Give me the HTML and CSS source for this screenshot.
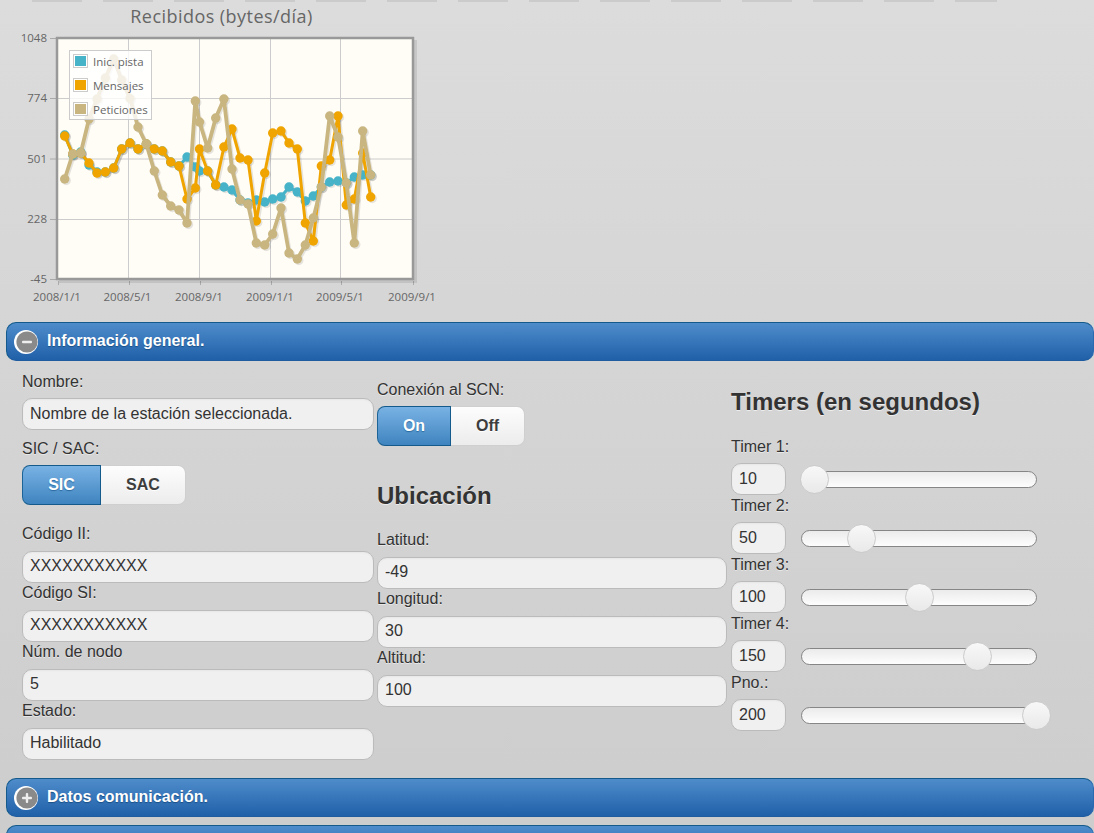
FILE: index.html
```html
<!DOCTYPE html>
<html lang="es">
<head>
<meta charset="utf-8">
<title>Estación</title>
<link rel="stylesheet" href="styles.css">
</head>
<body>
<div class="clipped-ticks"></div>
<section class="chart">
  <svg class="plot" width="450" height="320" viewBox="0 2 450 320" xmlns="http://www.w3.org/2000/svg">
    <defs>
      <marker id="dot-teal" markerUnits="userSpaceOnUse" markerWidth="12" markerHeight="12" refX="6" refY="6"><circle cx="6" cy="6" r="4.7" class="fill-teal"/></marker>
      <marker id="dot-orange" markerUnits="userSpaceOnUse" markerWidth="12" markerHeight="12" refX="6" refY="6"><circle cx="6" cy="6" r="4.7" class="fill-orange"/></marker>
      <marker id="dot-tan" markerUnits="userSpaceOnUse" markerWidth="12" markerHeight="12" refX="6" refY="6"><circle cx="6" cy="6" r="4.7" class="fill-tan"/></marker>
      <marker id="dot-shadow" markerUnits="userSpaceOnUse" markerWidth="12" markerHeight="12" refX="6" refY="6"><circle cx="6" cy="6" r="4.7" class="fill-shadow"/></marker>
      <polyline id="s-teal" points="64.7,135 72.7,155 80.7,152 89,165 97,172 105.3,172 113.7,168 121.7,149 130,143 138,149 146.3,144 154.3,149 162.3,151 170.7,162 179,166 187,157 195.3,167 199.5,171 207.6,171 215.7,185 223.9,187 232,190 240,200 248,203 256.3,200 264.7,202 272.7,199 281,197 289,187 297.3,192 305.3,201 313.3,196 321.3,187 329.7,182 338,181 346.3,183 354.3,177 362.7,175 370.7,175"/>
      <polyline id="s-orange" points="64.7,136 72.7,154 80.7,153 89,163 97,173 105.3,172 113.7,168 121.7,149 130,143 138,149 146.3,144 154.3,149 162.3,151 170.7,162 179,166 187,199 195.3,188 199.5,149 207.6,171 215.7,185 223.9,147 232,129 240,158 248,160 256.3,221 264.7,173 272.7,133 281,131 289,143 297.3,149 305.3,223 313.3,241 321.3,166 329.7,160 338,116 346.3,205 354.3,199 362.7,153 370.7,197"/>
      <polyline id="s-tan" points="64.7,179 72.7,154 80.7,153 89,119 97,99 105.3,78 113.7,59 121.7,80 130,98.5 138,127 146.3,144 154.3,171 162.3,195 170.7,206 179,210 187,223 195.3,101 199.5,122 207.6,148 215.7,118 223.9,99 232,169 240,200 248,204 256.3,243 264.7,245 272.7,234 281,208 289,253 297.3,259 305.3,245 313.3,218 321.3,187 329.7,116 338,137 346.3,183 354.3,243 362.7,131 370.7,175"/>
    </defs>

    <text class="title" x="221.5" y="23">Recibidos (bytes/día)</text>

    <rect class="canvas" x="57" y="38" width="356" height="241"/>
    <g class="grid">
      <line x1="58" y1="98.5" x2="413" y2="98.5"/>
      <line x1="58" y1="159" x2="413" y2="159"/>
      <line x1="58" y1="219.5" x2="413" y2="219.5"/>
      <line x1="128.5" y1="38" x2="128.5" y2="279"/>
      <line x1="199.5" y1="38" x2="199.5" y2="279"/>
      <line x1="270.5" y1="38" x2="270.5" y2="279"/>
      <line x1="340.5" y1="38" x2="340.5" y2="279"/>
    </g>
    <g class="ticks">
      <line x1="50" y1="38.5" x2="56" y2="38.5"/>
      <line x1="50" y1="98.5" x2="56" y2="98.5"/>
      <line x1="50" y1="159" x2="56" y2="159"/>
      <line x1="50" y1="219.5" x2="56" y2="219.5"/>
      <line x1="50" y1="279.5" x2="56" y2="279.5"/>
      <line x1="58.5" y1="281" x2="58.5" y2="285"/>
      <line x1="129.5" y1="281" x2="129.5" y2="285"/>
      <line x1="200.5" y1="281" x2="200.5" y2="285"/>
      <line x1="271.5" y1="281" x2="271.5" y2="285"/>
      <line x1="341.5" y1="281" x2="341.5" y2="285"/>
      <line x1="413.5" y1="281" x2="413.5" y2="285"/>
    </g>
    <polyline class="frame-shadow" points="415.5,40 415.5,281.5 59,281.5"/>
    <rect class="frame" x="57" y="38" width="356" height="241"/>

    <use href="#s-teal" class="shadow"/>
    <use href="#s-orange" class="shadow"/>
    <use href="#s-tan" class="shadow"/>
    <use href="#s-teal" class="line-teal"/>
    <use href="#s-orange" class="line-orange"/>
    <use href="#s-tan" class="line-tan"/>

    <g class="ylabels">
      <text x="47" y="42">1048</text>
      <text x="47" y="102">774</text>
      <text x="47" y="163">501</text>
      <text x="47" y="223">228</text>
      <text x="47" y="283">-45</text>
    </g>
    <g class="xlabels">
      <text x="57" y="301">2008/1/1</text>
      <text x="127.500" y="301">2008/5/1</text>
      <text x="199" y="301">2008/9/1</text>
      <text x="270" y="301">2009/1/1</text>
      <text x="340" y="301">2009/5/1</text>
      <text x="412" y="301">2009/9/1</text>
    </g>
  </svg>
  <ul class="legend">
    <li><i class="swatch sw-teal"></i>Inic. pista</li>
    <li><i class="swatch sw-orange"></i>Mensajes</li>
    <li><i class="swatch sw-tan"></i>Peticiones</li>
  </ul>
</section>

<h2 class="acc">
  <span class="acc-icon"><svg viewBox="0 0 24 24" width="24" height="24"><circle cx="12" cy="12" r="12" fill="#fff"/><circle cx="13" cy="12" r="10.6" fill="#8a8a8a"/><rect x="8" y="10.800" width="10" height="2.400" rx="1" fill="#eee"/></svg></span>
  Información general.
</h2>
<div class="panel">
  <div class="col col-a">
    <div class="field"><label>Nombre:</label><div class="input">Nombre de la estación seleccionada.</div></div>
    <div class="field gap-8"><label>SIC / SAC:</label>
      <div class="toggle toggle-a"><span class="opt on">SIC</span><span class="opt off">SAC</span></div></div>
    <div class="field gap-19"><label>Código II:</label><div class="input">XXXXXXXXXXX</div></div>
    <div class="field"><label>Código SI:</label><div class="input">XXXXXXXXXXX</div></div>
    <div class="field"><label>Núm. de nodo</label><div class="input">5</div></div>
    <div class="field"><label>Estado:</label><div class="input">Habilitado</div></div>
  </div>
  <div class="col col-b">
    <div class="field"><label>Conexión al SCN:</label>
      <div class="toggle toggle-b"><span class="opt on">On</span><span class="opt off">Off</span></div></div>
    <h3 class="heading h-ubic">Ubicación</h3>
    <div class="field"><label>Latitud:</label><div class="input">-49</div></div>
    <div class="field"><label>Longitud:</label><div class="input">30</div></div>
    <div class="field"><label>Altitud:</label><div class="input">100</div></div>
  </div>
  <div class="col col-c">
    <h3 class="heading h-timers">Timers (en segundos)</h3>
    <div class="field"><label>Timer 1:</label>
      <div class="slider-row"><div class="input num">10</div><div class="track"><span class="thumb" style="left:-1px"></span></div></div></div>
    <div class="field"><label>Timer 2:</label>
      <div class="slider-row"><div class="input num">50</div><div class="track"><span class="thumb" style="left:46px"></span></div></div></div>
    <div class="field"><label>Timer 3:</label>
      <div class="slider-row"><div class="input num">100</div><div class="track"><span class="thumb" style="left:104px"></span></div></div></div>
    <div class="field"><label>Timer 4:</label>
      <div class="slider-row"><div class="input num">150</div><div class="track"><span class="thumb" style="left:162px"></span></div></div></div>
    <div class="field"><label>Pno.:</label>
      <div class="slider-row"><div class="input num">200</div><div class="track"><span class="thumb" style="left:221px"></span></div></div></div>
  </div>
</div>
<h2 class="acc">
  <span class="acc-icon"><svg viewBox="0 0 24 24" width="24" height="24"><circle cx="12" cy="12" r="12" fill="#fff"/><circle cx="13" cy="12" r="10.6" fill="#8a8a8a"/><rect x="8" y="10.800" width="10" height="2.400" rx="1" fill="#eee"/><rect x="11.800" y="7" width="2.400" height="10" rx="1" fill="#eee"/></svg></span>
  Datos comunicación.
</h2>
<h2 class="acc acc-next"></h2>
</body>
</html>
```
FILE: styles.css
```css
* { box-sizing: border-box; }
html, body { margin: 0; height: 833px; overflow: hidden; }
body {
  background: linear-gradient(#dcdcdc 0, #d6d6d6 300px, #cdcdcd 833px);
  font-family: "Liberation Sans", Arial, sans-serif;
  color: #333;
}

/* slivers of the tick labels of the chart scrolled out above */
.clipped-ticks {
  height: 2px;
  width: 965px;
  margin-left: 32px;
  background: repeating-linear-gradient(90deg, #cbcbcb 0 50px, transparent 50px 71px);
}

.chart { position: relative; height: 320px; }
.plot { display: block; }
.title { font: 18px "Open Sans", sans-serif; letter-spacing: .45px; fill: #666; text-anchor: middle; }
.canvas { fill: #fffdf6; }
.grid line { stroke: #cccccc; stroke-width: 1; }
.ticks line { stroke: #aaa; stroke-width: 1; }
.frame { fill: none; stroke: #999; stroke-width: 2.500; }
.frame-shadow { fill: none; stroke: #000; stroke-opacity: .09; stroke-width: 3; }
.ylabels text { font: 11.500px "Open Sans", sans-serif; fill: #666; text-anchor: end; }
.xlabels text { font: 11.500px "Open Sans", sans-serif; fill: #666; text-anchor: middle; }

.fill-teal { fill: #46b3c8; }
.fill-orange { fill: #efa400; }
.fill-tan { fill: #c8b580; }
.fill-shadow { fill: #000; fill-opacity: .1; }

.line-teal, .line-orange, .line-tan, .shadow { fill: none; stroke-linejoin: round; }
.line-teal { stroke: #46b3c8; stroke-width: 3; marker: url(#dot-teal); }
.line-orange { stroke: #efa400; stroke-width: 3; marker: url(#dot-orange); }
.line-tan { stroke: #c8b580; stroke-width: 3.800; marker: url(#dot-tan); }
.shadow { stroke: #000; stroke-opacity: .1; stroke-width: 3.500; transform: translate(1.500px, 1.500px); marker: url(#dot-shadow); }

.legend {
  position: absolute;
  left: 69px;
  top: 48px;
  width: 83px;
  height: 70px;
  margin: 0;
  padding: 0 0 0 3px;
  list-style: none;
  display: flex;
  flex-direction: column;
  gap: 4px;
  background: rgba(255, 255, 255, .8);
  border: 1px solid #ccc;
  font: 11.500px "Open Sans", sans-serif;
  color: #666;
}
.legend li { display: flex; align-items: center; gap: 5px; height: 20px; white-space: nowrap; }
.swatch { display: block; flex: none; width: 15px; height: 14px; border: 1px solid #ccc; padding: 1px; background-clip: content-box; }
.sw-teal { background-color: #46b3c8; }
.sw-orange { background-color: #efa400; }
.sw-tan { background-color: #c8b580; }

.acc {
  display: flex;
  align-items: center;
  gap: 9px;
  height: 39px;
  margin: 0 0 0 6px;
  padding: 0 0 1px 7px;
  border: 1px solid #145a8a;
  border-bottom-color: #1f5c9f;
  border-right-color: #2a6ab0;
  border-radius: 10px;
  background: linear-gradient(#4e8ccb, #2060a8);
  color: #fff;
  font-size: 16px;
  font-weight: bold;
  text-shadow: 0 1px 1px #1b4f86;
}
.acc-icon { display: block; width: 24px; height: 24px; margin-top: 1px; }
.acc-icon svg { display: block; }
.acc-next { margin-top: 8px; }

.panel {
  display: grid;
  grid-template-columns: 355px 354px 1fr;
  padding: 0 0 18px 22px;
  height: 417px;
}
.col-a { padding-top: 10px; width: 352px; }
.col-b { padding-top: 18px; width: 350px; }
.col-c { padding-top: 27px; }

.field { display: flex; flex-direction: column; }
.gap-8 { margin-top: 8px; }
.gap-19 { margin-top: 19px; }
.field label {
  height: 27px;
  padding-top: 1px;
  line-height: 20px;
  font-size: 16px;
  color: #333;
  text-shadow: 0 1px 0 rgba(255, 255, 255, .5);
}
.gap-19 label, .gap-19 ~ .field label, .h-ubic ~ .field label { padding-top: 0; }
.input {
  height: 32px;
  line-height: 28px;
  padding-left: 7px;
  border: 1px solid #bbb;
  border-radius: 10px;
  background: #f0f0f0;
  font-size: 16px;
  color: #333;
  box-shadow: inset 0 1px 2px rgba(0, 0, 0, .04);
}
.col-a > .field:first-child .input, .num { line-height: 30px; }
.num { width: 55px; flex: none; }

.toggle {
  display: flex;
  height: 40px;
  font-size: 16px;
  font-weight: bold;
}
.toggle-a { width: 164px; }
.toggle-a .on { width: 79px; }
.toggle-a .off { width: 85px; }
.toggle-b { width: 148px; }
.toggle-b .on { width: 74px; }
.toggle-b .off { width: 74px; }
.opt { display: flex; align-items: center; justify-content: center; }
.on {
  color: #fff;
  background: linear-gradient(#79b2e4, #3f84bf);
  border: 1px solid #145a8a;
  border-left-color: #1c6497;
  border-right: 1px solid #145a8a;
  border-radius: 8px 0 0 8px;
  text-shadow: 0 1px 1px #2a6a9f;
}
.off {
  color: #3d3d3d;
  background: linear-gradient(#fdfdfd, #ececec);
  border: 1px solid #cfcfcf;
  border-left: 0;
  border-radius: 0 8px 8px 0;
  text-shadow: 0 1px 0 #fff;
}

.heading {
  margin: 0;
  height: 28px;
  line-height: 28px;
  font-size: 24px;
  font-weight: bold;
  color: #333;
  text-shadow: 0 1px 0 rgba(255, 255, 255, .6);
}
.h-ubic { margin: 36px 0 20px; }
.h-timers { margin-bottom: 20px; }

.slider-row { display: flex; align-items: center; }
.track {
  position: relative;
  width: 236px;
  height: 17px;
  margin-left: 15px;
  border: 1px solid #868686;
  border-radius: 9px;
  background: linear-gradient(#ebebeb, #fdfdfd);
}
.thumb {
  position: absolute;
  top: -7px;
  width: 29px;
  height: 29px;
  margin-left: -1px;
  border: 1px solid #cbcbcb;
  border-radius: 50%;
  background: linear-gradient(#f8f8f8, #e9e9e9);
}
```
